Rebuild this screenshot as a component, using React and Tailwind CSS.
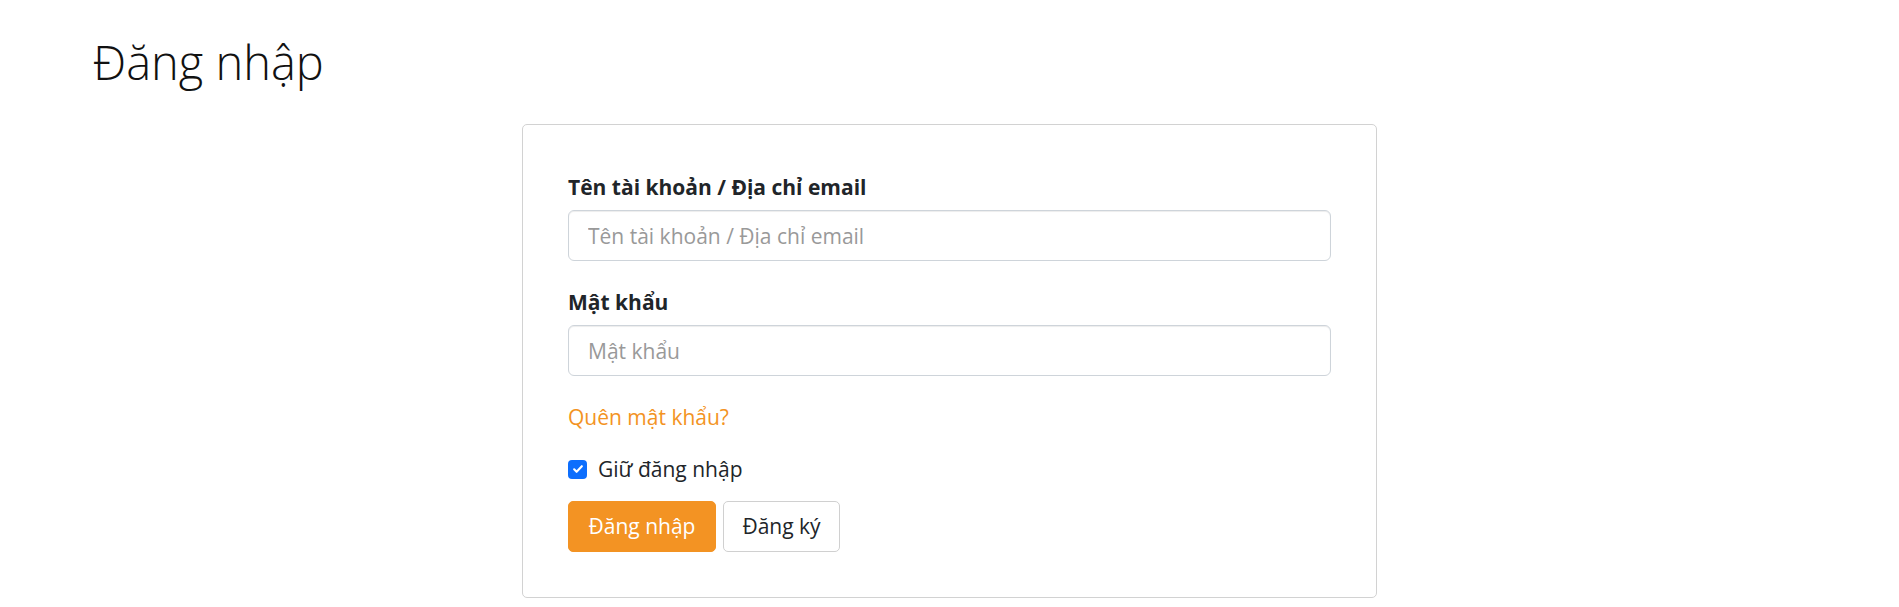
import React from "react";

export default function App() {
  return (
    <div className="min-h-screen bg-white text-[#212529] font-['Open_Sans','Noto_Sans',sans-serif]">
      <div className="pl-[93px] pt-[32px]">
        <h1 className="text-[47px] font-light leading-[60px] text-[#111]">Đăng nhập</h1>
      </div>
      <div className="mt-[32px] mx-auto w-[855px] border border-[#d2d2d2] rounded-[5px] pl-[45px] pr-[45px] pt-[47px] pb-[45px]">
        <form className="flex flex-col" onSubmit={(e) => e.preventDefault()}>
          <label className="text-[21px] leading-[30px] font-bold text-[#212529]">Tên tài khoản / Địa chỉ email</label>
          <input
            type="text"
            placeholder="Tên tài khoản / Địa chỉ email"
            className="mt-[8px] h-[51px] w-full rounded-[6px] border border-[#ced4da] px-[19px] text-[21px] leading-[30px] shadow-[inset_0_1px_1px_rgba(0,0,0,0.075)] placeholder:text-[#999] outline-none"
          />
          <label className="mt-[26px] text-[21px] leading-[30px] font-bold text-[#212529]">Mật khẩu</label>
          <input
            type="password"
            placeholder="Mật khẩu"
            className="mt-[8px] h-[51px] w-full rounded-[6px] border border-[#ced4da] px-[19px] text-[21px] leading-[30px] shadow-[inset_0_1px_1px_rgba(0,0,0,0.075)] placeholder:text-[#999] outline-none"
          />
          <div className="mt-[26px]">
            <a href="#" className="text-[21px] leading-[30px] text-[#f39323]">Quên mật khẩu?</a>
          </div>
          <div className="mt-[22px] flex items-center h-[30px]">
            <span className="flex h-[19px] w-[19px] items-center justify-center rounded-[4px] bg-[#0d6efd]">
              <svg viewBox="0 0 20 20" className="h-[14px] w-[14px]" fill="none">
                <path d="M4.5 10.5l3.5 3.5 7.5-8" stroke="#fff" strokeWidth="3" strokeLinecap="round" strokeLinejoin="round" />
              </svg>
            </span>
            <span className="ml-[11px] text-[21px] leading-[30px] text-[#212529]">Giữ đăng nhập</span>
          </div>
          <div className="mt-[17px] flex gap-[7px]">
            <button type="submit" className="h-[51px] w-[148px] rounded-[5px] border border-[#f39323] bg-[#f39323] text-[21px] text-white">Đăng nhập</button>
            <button type="button" className="h-[51px] w-[117px] rounded-[5px] border border-[#d0d0d0] bg-white text-[21px] text-[#212529]">Đăng ký</button>
          </div>
        </form>
      </div>
    </div>
  );
}
